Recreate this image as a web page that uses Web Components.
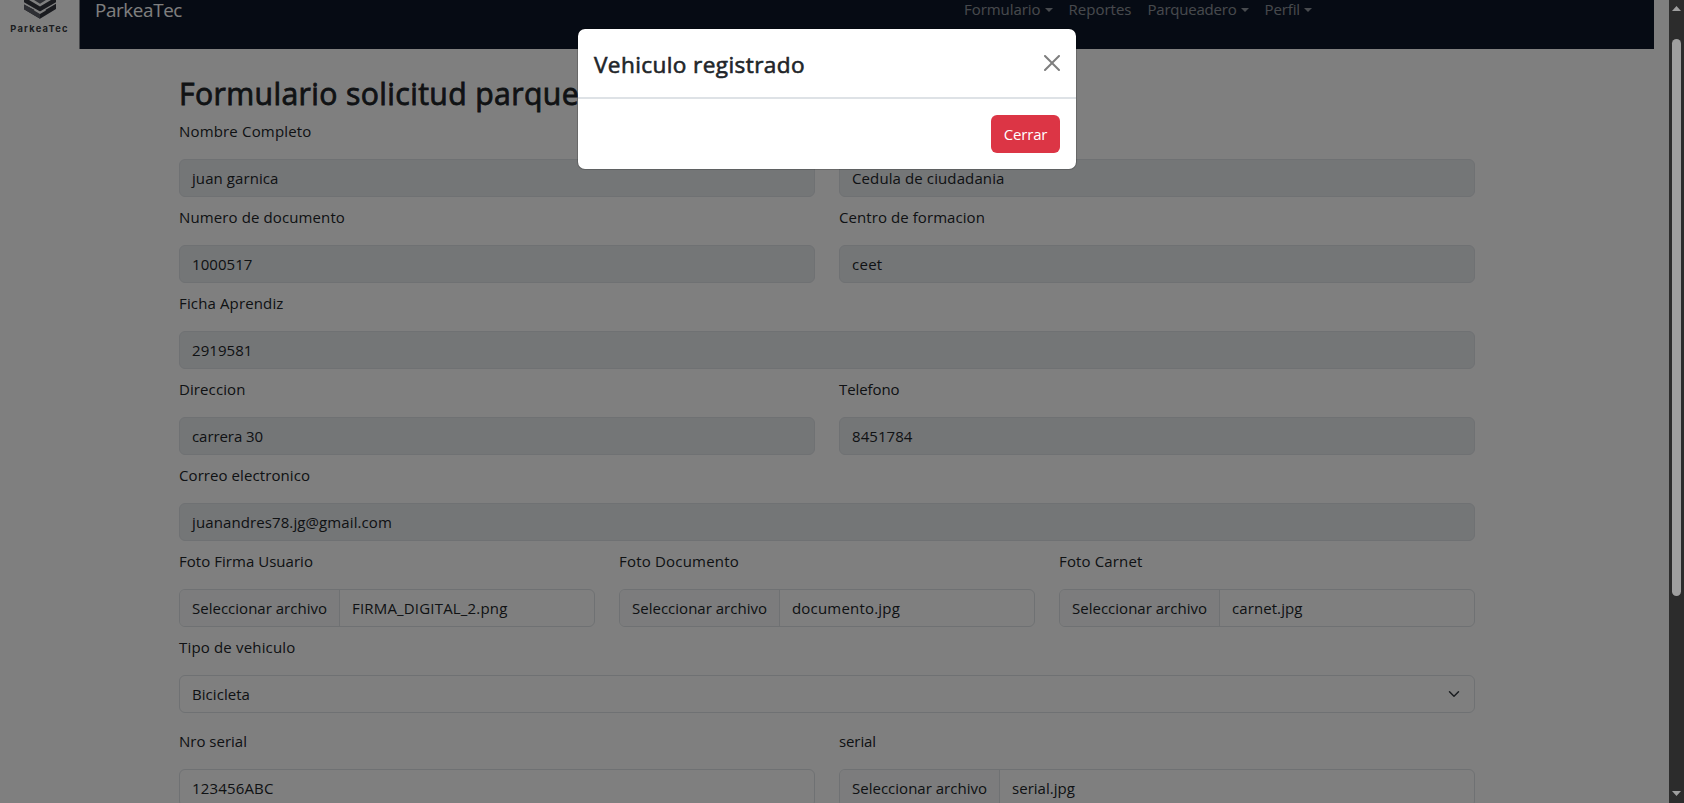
<!DOCTYPE html>
<html lang="es">
<head>
<meta charset="utf-8">
<title>ParkeaTec</title>
<style>
html,body{margin:0;height:100%;overflow:hidden}
body{font-family:"Open Sans","Noto Sans",sans-serif;font-size:15px;line-height:24px;color:#212529;background:#fff}
</style>
</head>
<body>
<parking-app></parking-app>
<script>
class BaseEl extends HTMLElement{
  connectedCallback(){
    if(this.shadowRoot)return;
    this.attachShadow({mode:'open'}).innerHTML=this.render();
    this.ready&&this.ready();
  }
  a(n){return this.getAttribute(n)||''}
}

/* Text run tracked to a given advance width */
customElements.define('fit-text',class extends BaseEl{
  render(){return `<style>:host{display:inline-block;white-space:nowrap}</style><slot></slot>`}
  ready(){
    const w=parseFloat(this.a('w')),n=this.textContent.length;
    const nat=this.getBoundingClientRect().width;
    if(w&&n)this.style.letterSpacing=((w-nat)/n).toFixed(4)+'px';
  }
});

customElements.define('brand-logo',class extends BaseEl{
  render(){return `<style>
  :host{display:flex;flex-direction:column;align-items:center;height:49px;background:#fff;border-right:1px solid #8a8d92;box-sizing:border-box;width:80px;flex:none}
  svg{display:block}
  span{font:700 9.3px/12px "Inter",sans-serif;color:#3b3d43;margin-top:4px}
  </style>
  <svg width="34" height="19" viewBox="0 0 34 19">
  <path fill="#34363f" d="M1 4.5 17 13 33 3.8V9L17 18.8 1 9.3Z"/>
  <path fill="#5d5f68" d="M1 4.5 17 13V18.8L1 9.3Z"/>
  <path fill="#34363f" d="M1 0H6L17 6.6 28 0H33V2.2L17 11.4 1 2.2Z"/>
  <path fill="#5d5f68" d="M11 0H23L17 3.8Z"/>
  <path d="M11.5 9.8 17 13 22.5 9.8" fill="none" stroke="#fff" stroke-width="1.6"/></svg>
  <span><fit-text w="58.5">ParkeaTec</fit-text></span>`}
});

customElements.define('nav-link',class extends BaseEl{
  render(){return `<style>
  :host{display:flex;align-items:center;color:rgba(255,255,255,.55);padding:0 8px}
  i{display:${this.hasAttribute('menu')?'block':'none'};margin-left:4px;border:4.8px solid transparent;border-top-color:currentColor;border-bottom:0;margin-top:1px}
  </style><fit-text w="${this.a('w')}">${this.a('label')}</fit-text><i></i>`}
});

customElements.define('nav-bar',class extends BaseEl{
  render(){return `<style>
  :host{display:flex;align-items:flex-start;width:1654px;height:49px;background:#0d1728}
  .brand{font-size:18.8px;line-height:20px;color:#fff;margin-left:15px;flex:none}
  nav{display:flex;margin-left:774px;line-height:18px}
  </style><brand-logo></brand-logo><div class="brand"><fit-text w="87">ParkeaTec</fit-text></div>
  <nav><nav-link label="Formulario" w="76.5" menu></nav-link><nav-link label="Reportes" w="63"></nav-link><nav-link label="Parqueadero" w="89" menu></nav-link><nav-link label="Perfil" w="35.5" menu></nav-link></nav>`}
});

customElements.define('form-field',class extends BaseEl{
  render(){
    const t=this.a('type'),v=`<fit-text w="${this.a('vw')}">${this.a('value')}</fit-text>`;
    const btn=t==='file'?`<div class="btn"><fit-text w="135">Seleccionar archivo</fit-text></div>`:'';
    const chev=t==='select'?`<svg width="16" height="12" viewBox="0 0 16 16"><path fill="none" stroke="#343a40" stroke-linecap="round" stroke-linejoin="round" stroke-width="2" d="m2 5 6 6 6-6"/></svg>`:'';
    return `<style>
  :host{display:block;flex:1 1 0;min-width:0}
  label{display:block;height:24px;padding-top:8px;margin-bottom:16px}
  .box{display:flex;height:38px;box-sizing:border-box;border:1px solid #dee2e6;border-radius:6px;background:${t?'#fff':'#e9ecef'}}
  .val{flex:1;padding:6px 12px}
  .btn{background:#f8f9fa;border-right:1px solid #dee2e6;padding:6px 12px;border-radius:5px 0 0 5px}
  svg{align-self:center;margin-right:14px;width:12px;height:12px}
  </style><label>${this.a('label')?`<fit-text w="${this.a('lw')}">${this.a('label')}</fit-text>`:''}</label><div class="box">${btn}<div class="val">${v}</div>${chev}</div>`}
});

customElements.define('form-row',class extends BaseEl{
  render(){return `<style>:host{display:flex;gap:24px}</style><slot></slot>`}
});

customElements.define('request-form',class extends BaseEl{
  render(){return `<style>
  :host{display:block;width:1296px;margin:25px 0 0 179px}
  h2{margin:0 0 -2px;font-size:30.2px;line-height:39px;height:39px;font-weight:400;-webkit-text-stroke:.8px currentColor}
  .gap{margin-top:8px}
  </style>
  <h2><fit-text w="400">Formulario solicitud parque</fit-text></h2>
  <form-row><form-field label="Nombre Completo" lw="132.5" value="juan garnica" vw="86.5"></form-field><form-field value="Cedula de ciudadania" vw="152.5"></form-field></form-row>
  <form-row><form-field label="Numero de documento" lw="166" value="1000517" vw="60.5"></form-field><form-field label="Centro de formacion" lw="146" value="ceet" vw="30.5"></form-field></form-row>
  <form-row><form-field label="Ficha Aprendiz" lw="104.5" value="2919581" vw="60.5"></form-field></form-row>
  <form-row><form-field label="Direccion" lw="66.5" value="carrera 30" vw="71"></form-field><form-field label="Telefono" lw="60.5" value="8451784" vw="60.5"></form-field></form-row>
  <form-row><form-field label="Correo electronico" lw="131" value="juanandres78.jg@gmail.com" vw="200"></form-field></form-row>
  <form-row><form-field label="Foto Firma Usuario" lw="134" type="file" value="FIRMA_DIGITAL_2.png" vw="155.5"></form-field><form-field label="Foto Documento" lw="120" type="file" value="documento.jpg" vw="108"></form-field><form-field label="Foto Carnet" lw="83.5" type="file" value="carnet.jpg" vw="70.5"></form-field></form-row>
  <form-row><form-field label="Tipo de vehiculo" lw="116.5" type="select" value="Bicicleta" vw="58"></form-field></form-row>
  <form-row class="gap"><form-field label="Nro serial" lw="68" type="text" value="123456ABC" vw="81.5"></form-field><form-field label="serial" lw="37" type="file" value="serial.jpg" vw="63"></form-field></form-row>`}
});

customElements.define('modal-dialog',class extends BaseEl{
  render(){return `<style>
  :host{display:block;position:absolute;left:577px;top:28px;width:500px;box-sizing:border-box;border:1px solid rgba(0,0,0,.176);border-radius:8px;background:#fff;background-clip:padding-box}
  header{display:flex;justify-content:space-between;align-items:flex-start;padding:16px;height:36px;border-bottom:1px solid #dee2e6}
  .t{font-size:22.6px;line-height:40px;font-weight:400;-webkit-text-stroke:.6px currentColor}
  svg{display:block;margin-top:10px;opacity:.5}
  footer{display:flex;justify-content:flex-end;padding:16px;border-top:1px solid #dee2e6}
  button{font:inherit;color:#fff;background:#dc3545;border:0;border-radius:6px;width:69px;height:38px;padding:0;line-height:38px}
  </style>
  <header><div class="t"><fit-text w="211">Vehiculo registrado</fit-text></div>
  <svg width="16" height="16" viewBox="0 0 16 16"><path d="M.293.293a1 1 0 0 1 1.414 0L8 6.586 14.293.293a1 1 0 1 1 1.414 1.414L9.414 8l6.293 6.293a1 1 0 0 1-1.414 1.414L8 9.414l-6.293 6.293a1 1 0 0 1-1.414-1.414L6.586 8 .293 1.707a1 1 0 0 1 0-1.414z"/></svg></header>
  <footer><button><fit-text w="43.5">Cerrar</fit-text></button></footer>`}
});

customElements.define('scroll-bar',class extends BaseEl{
  render(){return `<style>
  :host{display:flex;flex-direction:column;align-items:center;width:15px;height:803px;background:#2c2c2c;box-sizing:border-box;padding:6px 0 7px;flex:none}
  .thumb{width:9px;height:557px;border-radius:5px;background:#9f9f9f;margin:28px 0 auto}
  svg{display:block}
  </style><svg width="9" height="5"><path fill="#9f9f9f" d="M4.5 0 9 5H0z"/></svg><div class="thumb"></div><svg width="9" height="5"><path fill="#9f9f9f" d="M0 0H9L4.5 5z"/></svg>`}
});

customElements.define('parking-app',class extends BaseEl{
  render(){return `<style>
  :host{display:flex;position:relative;width:1684px;height:803px;overflow:hidden}
  main{width:1669px;height:803px;overflow:hidden;position:relative;background:#fff}
  .backdrop{position:absolute;inset:0;background:#000;opacity:.5}
  </style><main><nav-bar></nav-bar><request-form></request-form><div class="backdrop"></div><modal-dialog></modal-dialog></main><scroll-bar></scroll-bar>`}
});
</script>
</body>
</html>
